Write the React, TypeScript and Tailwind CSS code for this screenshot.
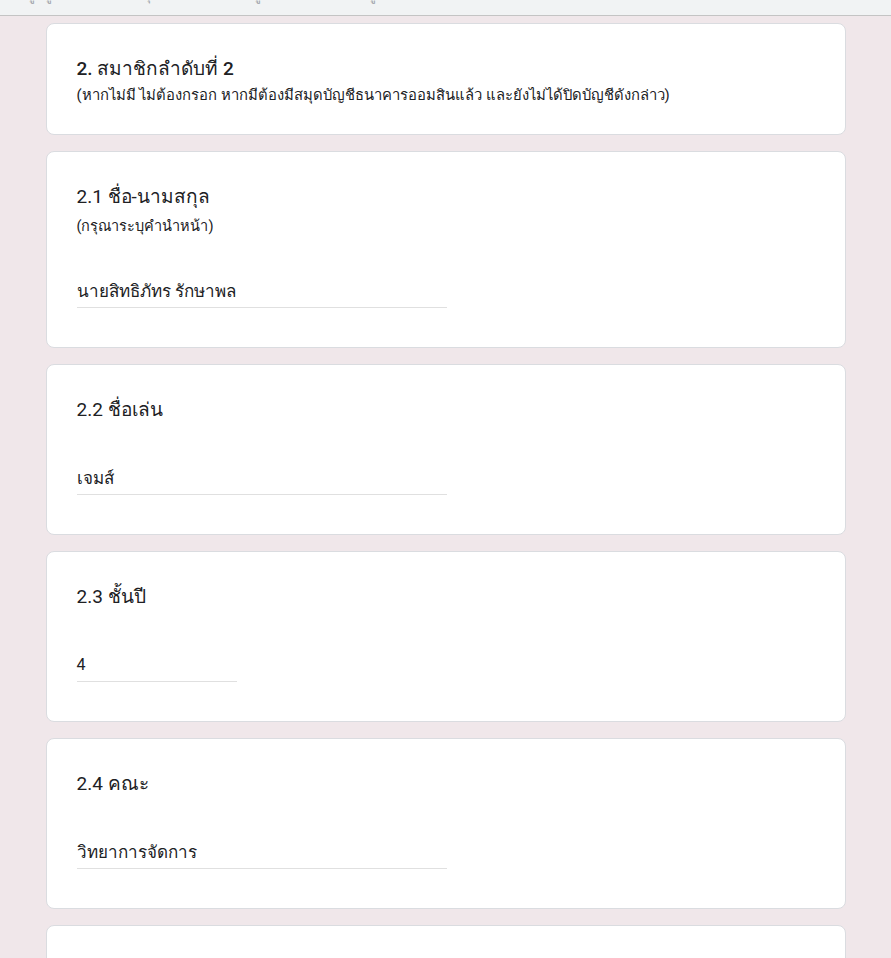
import React from "react";

const font = { fontFamily: "Roboto, 'Noto Sans', 'DejaVu Sans', sans-serif" };

function Answer({ value, width, thai = true }: { value: string; width: string; thai?: boolean }) {
  return (
    <div className={`${width} border-b border-[#e0e0e0] pb-[4px]`}>
      <div
        className={
          thai
            ? "text-[17px] leading-6 text-[#202124] font-medium"
            : "text-[16px] leading-6 text-[#202124]"
        }
      >
        {value}
      </div>
    </div>
  );
}

function Question({
  title,
  subtitle,
  value,
  width,
  thai = true,
}: {
  title: string;
  subtitle?: string;
  value: string;
  width: string;
  thai?: boolean;
}) {
  return (
    <div className="bg-white border border-[#dadce0] rounded-[8px] px-[30px] pt-[33px] pb-[39px]">
      <div className="text-[19px] leading-6 text-[#202124]">{title}</div>
      {subtitle ? (
        <div className="mt-[8px] text-[14.5px] leading-5 text-[#202124]">{subtitle}</div>
      ) : null}
      <div className={subtitle ? "mt-[42px]" : "mt-[44px]"}>
        <Answer value={value} width={width} thai={thai} />
      </div>
    </div>
  );
}

export default function App() {
  return (
    <div className="h-[958px] overflow-hidden bg-[#f0e7ea]" style={font}>
      <div className="h-[16px] bg-[#f1f3f4] border-b border-[#c4c4c4] overflow-hidden">
        <div className="-mt-[17px] pl-[8px] text-[14px] leading-6 text-[#9aa0a6] whitespace-nowrap">
          ข้อมูลผู้สมัคร ส่วนที่ ๑ ทุกคนต้องกรอกข้อมูลให้ครบถ้วน และถูกต้องตามความเป็นจริง
        </div>
      </div>
      <div className="w-[800px] mx-auto pt-[7px] flex flex-col gap-4">
        <div className="bg-white border border-[#dadce0] rounded-[8px] px-[30px] pt-[33px] pb-[29px]">
          <div className="text-[19px] leading-6 text-[#202124] font-medium">2. สมาชิกลำดับที่ 2</div>
          <div className="mt-[4px] text-[14.8px] leading-5 text-[#202124]">
            (หากไม่มี ไม่ต้องกรอก หากมีต้องมีสมุดบัญชีธนาคารออมสินแล้ว และยังไม่ได้ปิดบัญชีดังกล่าว)
          </div>
        </div>
        <Question
          title="2.1 ชื่อ-นามสกุล"
          subtitle="(กรุณาระบุคำนำหน้า)"
          value="นายสิทธิภัทร รักษาพล"
          width="w-[370px]"
        />
        <Question title="2.2 ชื่อเล่น" value="เจมส์" width="w-[370px]" />
        <Question title="2.3 ชั้นปี" value="4" width="w-[160px]" thai={false} />
        <Question title="2.4 คณะ" value="วิทยาการจัดการ" width="w-[370px]" />
        <div className="bg-white border border-[#dadce0] rounded-[8px] h-[120px]" />
      </div>
    </div>
  );
}
